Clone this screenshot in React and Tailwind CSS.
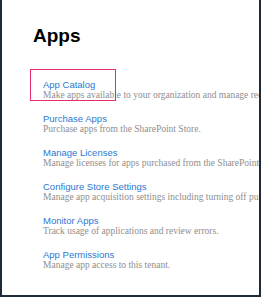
import React from 'react';

const items = [
  { title: 'App Catalog', desc: 'Make apps available to your organization and manage requests for apps.', highlight: true },
  { title: 'Purchase Apps', desc: 'Purchase apps from the SharePoint Store.' },
  { title: 'Manage Licenses', desc: 'Manage licenses for apps purchased from the SharePoint Store.' },
  { title: 'Configure Store Settings', desc: 'Manage app acquisition settings including turning off purchases.' },
  { title: 'Monitor Apps', desc: 'Track usage of applications and review errors.' },
  { title: 'App Permissions', desc: 'Manage app access to this tenant.' },
];

const App = () => {
  return (
    <div className="w-[261px] h-[297px] bg-white border-l-2 border-r-2 border-b-2 border-[#1f2a36] overflow-hidden">
      <div className="pl-[31px] pt-[25px]">
        <h1 className="text-[19px] leading-[22px] font-bold text-black font-['Liberation_Sans',Arial,sans-serif]">
          Apps
        </h1>

        {/* Links */}
        <div className="mt-[32px] pl-[10px] flex flex-col gap-[12px]">
          {items.map((item) => (
            <div key={item.title} className="relative whitespace-nowrap">
              {item.highlight && (
                <span className="absolute -top-[10px] -left-[13px] w-[86px] h-[32px] border border-[#ea2d6a]" />
              )}
              <div className="text-[9.5px] leading-[11px] text-[#2a78d2] font-['Liberation_Sans',Arial,sans-serif]">
                {item.title}
              </div>
              <div className="text-[9.5px] leading-[11px] text-[#8e8e8e] font-['Liberation_Serif','Times_New_Roman',serif]">
                {item.desc}
              </div>
            </div>
          ))}
        </div>
      </div>
    </div>
  );
};

export default App;
